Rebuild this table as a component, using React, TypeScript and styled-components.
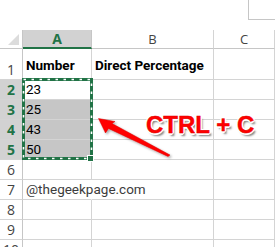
import styled, { createGlobalStyle, css } from 'styled-components';

const GlobalStyle = createGlobalStyle`
  html, body {
    margin: 0;
    padding: 0;
    background: #ffffff;
    overflow: hidden;
  }
  * {
    box-sizing: border-box;
  }
`;

const GREEN = '#217346';
const GRID = '#d4d4d4';

const Page = styled.div`
  width: 275px;
  height: 247px;
  overflow: hidden;
  position: relative;
  font-family: Roboto, "Liberation Sans", Arial, sans-serif;
`;

const TopBar = styled.div`
  height: 30px;
  display: flex;
  justify-content: flex-end;
  align-items: flex-start;
`;

const NameBox = styled.div`
  width: 27px;
  height: 20px;
  border-left: 1px solid #c6c6c6;
  border-bottom: 1px solid #c6c6c6;
`;

const Sheet = styled.div`
  display: grid;
  grid-template-columns: 23px 69px 122px 1fr;
  grid-template-rows: 19px 31px repeat(9, 20px);
`;

const Corner = styled.div`
  position: relative;
  border-right: 1px solid #c6c6c6;
  border-bottom: 1px solid #c6c6c6;

  &::after {
    content: '';
    position: absolute;
    right: 3px;
    bottom: 3px;
    width: 0;
    height: 0;
    border-left: 11px solid transparent;
    border-bottom: 11px solid #dcdcdc;
  }
`;

const ColHead = styled.div<{ $active?: boolean }>`
  display: flex;
  align-items: center;
  justify-content: center;
  font-family: "Open Sans", "Liberation Sans", sans-serif;
  font-size: 13px;
  color: #444444;
  border-right: 1px solid ${GRID};
  border-bottom: 1px solid #c6c6c6;
  ${(p) =>
    p.$active &&
    css`
      background: #d2d2d2;
      color: ${GREEN};
      font-weight: 700;
      font-size: 14px;
      border-right-color: #c6c6c6;
      border-bottom: 2px solid ${GREEN};
    `}
`;

const RowHead = styled.div<{ $active?: boolean }>`
  display: flex;
  align-items: flex-end;
  justify-content: center;
  font-family: "Open Sans", "Liberation Sans", sans-serif;
  font-size: 14px;
  line-height: 19px;
  color: #444444;
  border-right: 1px solid #c6c6c6;
  border-bottom: 1px solid ${GRID};
  ${(p) =>
    p.$active &&
    css`
      background: #d2d2d2;
      color: ${GREEN};
      font-weight: 700;
    `}
`;

const Cell = styled.div<{ $bold?: boolean; $fill?: boolean; $tall?: boolean; $spill?: boolean; $muted?: boolean }>`
  display: flex;
  align-items: flex-end;
  padding: 0 0 ${(p) => (p.$tall ? '4px' : '0px')} 3px;
  font-size: 13.5px;
  line-height: 19px;
  white-space: nowrap;
  overflow: visible;
  position: relative;
  z-index: 1;
  color: ${(p) => (p.$muted ? '#3c3c3c' : '#000000')};
  font-weight: ${(p) => (p.$bold ? 700 : 400)};
  background: ${(p) => (p.$fill ? '#c6c6c6' : 'transparent')};
  border-right: 1px solid ${(p) => (p.$spill ? 'transparent' : GRID)};
  border-bottom: 1px solid ${GRID};
`;

const Marquee = styled.svg`
  position: absolute;
  left: 22px;
  top: 78px;
  width: 71px;
  height: 82px;
  z-index: 2;
`;

const Handle = styled.div`
  position: absolute;
  left: 87px;
  top: 155px;
  width: 7px;
  height: 7px;
  background: ${GREEN};
  border: 1px solid #ffffff;
  z-index: 3;
`;

const Arrow = styled.svg`
  position: absolute;
  left: 0;
  top: 0;
  width: 275px;
  height: 247px;
  z-index: 4;
  pointer-events: none;
`;

const Callout = styled.div`
  position: absolute;
  left: 146px;
  top: 113px;
  z-index: 5;
  font-family: "Liberation Sans", Arial, sans-serif;
  font-weight: 700;
  font-size: 24px;
  line-height: 24px;
  white-space: nowrap;
  color: #ff0000;
  -webkit-text-stroke: 0.4px #e00000;
  text-shadow:
    -1px -1px 0 #fff, 1px -1px 0 #fff, -1px 1px 0 #fff, 1px 1px 0 #fff,
    0 -1.5px 0 #fff, 0 1.5px 0 #fff, -1.5px 0 0 #fff, 1.5px 0 0 #fff,
    2px 3px 2px rgba(0, 0, 0, 0.5);
`;

type Row = { n: number; a?: string; b?: string; bold?: boolean; tall?: boolean; muted?: boolean };

const rows: Row[] = [
  { n: 1, a: 'Number', b: 'Direct Percentage', bold: true, tall: true },
  { n: 2, a: '23' },
  { n: 3, a: '25' },
  { n: 4, a: '43' },
  { n: 5, a: '50' },
  { n: 6 },
  { n: 7, a: '@thegeekpage.com', muted: true },
  { n: 8 },
  { n: 9 },
  { n: 10 },
];

export default function App() {
  return (
    <Page>
      <GlobalStyle />
      <TopBar>
        <NameBox />
      </TopBar>
      <Sheet>
        <Corner />
        <ColHead $active>A</ColHead>
        <ColHead>B</ColHead>
        <ColHead>C</ColHead>
        {rows.map((r) => {
          const selected = r.n >= 2 && r.n <= 5;
          return [
            <RowHead key={`h${r.n}`} $active={selected}>
              {r.n}
            </RowHead>,
            <Cell
              key={`a${r.n}`}
              $bold={r.bold}
              $tall={r.tall}
              $fill={r.n >= 3 && r.n <= 5}
              $spill={r.muted}
              $muted={r.muted}
            >
              {r.a}
            </Cell>,
            <Cell key={`b${r.n}`} $bold={r.bold} $tall={r.tall}>
              {r.b}
            </Cell>,
            <Cell key={`c${r.n}`} $tall={r.tall} />,
          ];
        })}
      </Sheet>

      <Marquee viewBox="0 0 71 82">
        <rect x="1.5" y="1.5" width="68" height="79" fill="none" stroke={GREEN} strokeWidth="3" />
        <rect
          x="1.5"
          y="1.5"
          width="68"
          height="79"
          fill="none"
          stroke="#ffffff"
          strokeWidth="1.6"
          strokeDasharray="2.5 5.5"
        />
      </Marquee>
      <Handle />

      <Arrow viewBox="0 0 275 247">
        <defs>
          <filter id="arrowShadow" x="-20%" y="-20%" width="140%" height="140%">
            <feDropShadow dx="1.5" dy="1.5" stdDeviation="1" floodColor="#000" floodOpacity="0.35" />
          </filter>
        </defs>
        <polygon
          points="98.5,118.5 115,121.5 112,123.5 170,155 168,156.5 108.5,128.5 105.5,133"
          fill="#ff0000"
          stroke="#d40000"
          strokeWidth="0.5"
          strokeLinejoin="round"
          filter="url(#arrowShadow)"
        />
      </Arrow>

      <Callout>CTRL + C</Callout>
    </Page>
  );
}
